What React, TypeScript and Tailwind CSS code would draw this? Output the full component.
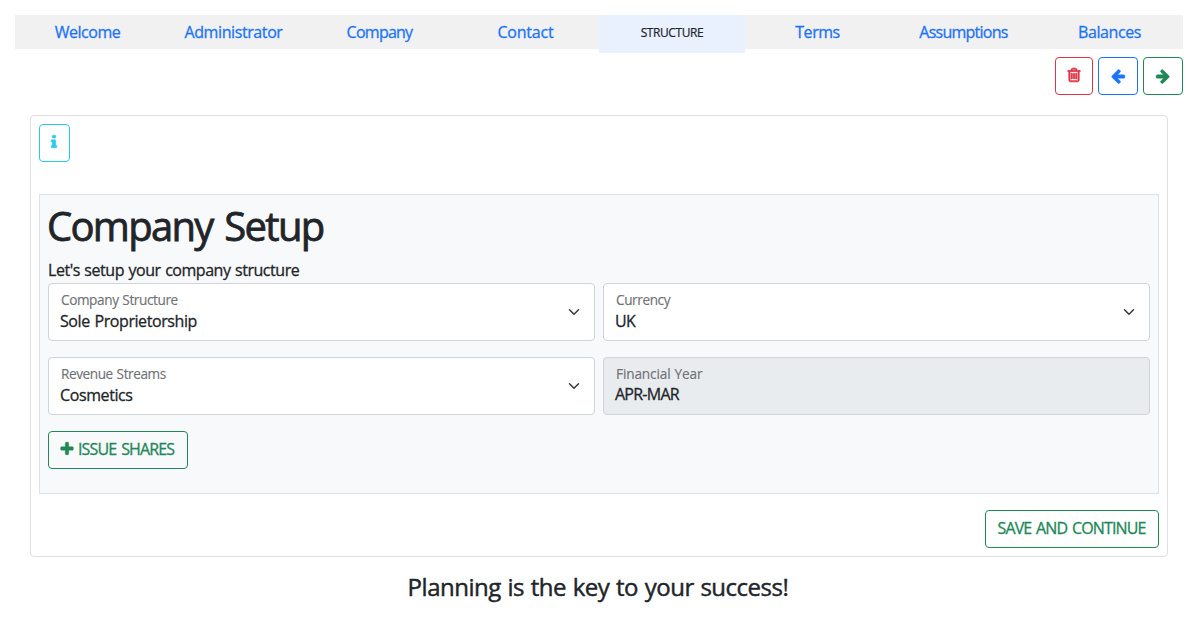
import React from "react";

const ICONS = {
  trash:
    "M704 736v576q0 14-9 23t-23 9h-64q-14 0-23-9t-9-23v-576q0-14 9-23t23-9h64q14 0 23 9t9 23zm256 0v576q0 14-9 23t-23 9h-64q-14 0-23-9t-9-23v-576q0-14 9-23t23-9h64q14 0 23 9t9 23zm256 0v576q0 14-9 23t-23 9h-64q-14 0-23-9t-9-23v-576q0-14 9-23t23-9h64q14 0 23 9t9 23zm128 724v-948h-896v948q0 22 7 40.5t14.5 27 10.5 8.5h832q3 0 10.5-8.5t14.5-27 7-40.5zm-672-1076h448l-48-117q-7-9-17-11h-317q-10 2-17 11zm928 32v64q0 14-9 23t-23 9h-96v948q0 83-47 143.5t-113 60.5h-832q-66 0-113-58.5t-47-141.5v-952h-96q-14 0-23-9t-9-23v-64q0-14 9-23t23-9h309l70-167q15-37 54-63t79-26h320q40 0 79 26t54 63l70 167h309q14 0 23 9t9 23z",
  arrow:
    "M1664 896v128q0 53-32.5 90.5t-84.5 37.5h-704l293 294q38 36 38 90t-38 90l-75 76q-37 37-90 37-52 0-91-37l-651-652q-37-37-37-90 0-52 37-91l651-650q38-38 91-38 52 0 90 38l75 74q38 38 38 91t-38 91l-293 293h704q52 0 84.5 37.5t32.5 90.5z",
  plus: "M1600 736v192q0 40-28 68t-68 28h-416v416q0 40-28 68t-68 28h-192q-40 0-68-28t-28-68v-416h-416q-40 0-68-28t-28-68v-192q0-40 28-68t68-28h416v-416q0-40 28-68t68-28h192q40 0 68 28t28 68v416h416q40 0 68 28t28 68z",
  info: "M1216 1344v128q0 26-19 45t-45 19h-512q-26 0-45-19t-19-45v-128q0-26 19-45t45-19h64v-384h-64q-26 0-45-19t-19-45v-128q0-26 19-45t45-19h384q26 0 45 19t19 45v576h64q26 0 45 19t19 45zm-128-1152v192q0 26-19 45t-45 19h-256q-26 0-45-19t-19-45v-192q0-26 19-45t45-19h256q26 0 45 19t19 45z",
};

function Icon({ name, bold = "50", className = "" }: { name: keyof typeof ICONS; bold?: string; className?: string }) {
  return (
    <svg viewBox="0 0 1792 1792" fill="currentColor" stroke="currentColor" strokeWidth={bold} className={`size-4 shrink-0 overflow-visible ${className}`}>
      <path d={ICONS[name]} />
    </svg>
  );
}

const tabs = [
  { label: "Welcome", track: "tracking-[-0.45px]" },
  { label: "Administrator", track: "tracking-[-0.4px]" },
  { label: "Company", track: "tracking-[-0.75px]" },
  { label: "Contact", track: "tracking-[-0.2px]" },
  { label: "STRUCTURE", track: "tracking-[-0.4px]", active: true },
  { label: "Terms", track: "tracking-[-0.45px]" },
  { label: "Assumptions", track: "tracking-[-0.75px]" },
  { label: "Balances", track: "tracking-[-0.4px]" },
];

function Field({ label, value, labelTrack, valueTrack, disabled = false }: { label: string; value: string; labelTrack: string; valueTrack: string; disabled?: boolean }) {
  return (
    <div className={`flex h-[58px] items-center justify-between rounded-[4px] border border-[#ced4da] pr-3 pl-[11px] ${disabled ? "bg-[#e9ecef]" : "bg-white"}`}>
      <div className={disabled ? "pb-[3px]" : "pb-[2px]"}>
        <div className={`pl-px text-[13.6px] whitespace-nowrap text-[#6f7275] [-webkit-text-stroke:0.15px] ${disabled ? "leading-[19px]" : "leading-5"} ${labelTrack}`}>{label}</div>
        <div className={`leading-[22px] whitespace-nowrap ${valueTrack}`}>{value}</div>
      </div>
      {!disabled && (
        <svg viewBox="0 0 16 16" fill="none" stroke="#343a40" strokeWidth="2" strokeLinecap="round" strokeLinejoin="round" className="h-3 w-4">
          <path d="m2 5 6 6 6-6" />
        </svg>
      )}
    </div>
  );
}

export default function App() {
  return (
    <div className="h-[644px] overflow-hidden bg-white pt-[15px] pr-[14px] pl-[15px] font-['Open_Sans',sans-serif] text-base text-[#212529] [-webkit-text-stroke:0.3px]">
      <nav className="grid h-[34px] grid-cols-8 items-start bg-[#f1f1f1]">
        {tabs.map((t) =>
          t.active ? (
            <button key={t.label} className={`h-[38px] bg-[#e9f1ff] pb-[2px] text-[12px] leading-[36px] [-webkit-text-stroke:0.2px] ${t.track}`}>{t.label}</button>
          ) : (
            <button key={t.label} className={`h-[34px] pr-px leading-[34px] text-[#1b73f8] ${t.track}`}>{t.label}</button>
          ),
        )}
      </nav>
      <div className="mt-2 flex justify-end gap-[5px]">
        <button className="flex h-[38px] w-[38px] items-center justify-center rounded-[4px] border border-[#dc3545] pb-[2px] text-[#dc3545]"><Icon name="trash" bold="90" /></button>
        <button className="flex h-[38px] w-10 items-center justify-center rounded-[4px] border border-[#1b73f8] pb-px text-[#1b73f8]"><Icon name="arrow" /></button>
        <button className="flex h-[38px] w-10 items-center justify-center rounded-[4px] border border-[#218756] pr-px pb-px text-[#218756]"><Icon name="arrow" className="-scale-x-100" /></button>
      </div>
      <main className="mx-[15px] mt-5 h-[442px] rounded-[4px] border border-[#dfdfdf] p-2">
        <button className="flex h-[38px] w-[31px] items-center justify-center rounded-[4px] border border-[#29c9ee] pr-px pb-[2px] text-[#29c9ee]"><Icon name="info" /></button>
        <section className="mt-8 h-[300px] border border-[#dee2e6] bg-[#f8f9fa] px-2 pt-2">
          <h1 className="-ml-px h-14 text-[40px] leading-[45px] whitespace-nowrap tracking-[-1.7px] [-webkit-text-stroke:0.8px] [word-spacing:3px]">Company Setup</h1>
          <p className="-ml-px h-6 pl-px leading-[22px] whitespace-nowrap tracking-[-0.46px] [word-spacing:0.8px]">Let's setup your company structure</p>
          <div className="grid grid-cols-2 gap-x-2 gap-y-4">
            <Field label="Company Structure" value="Sole Proprietorship" labelTrack="tracking-[-0.4px] [word-spacing:0.7px]" valueTrack="tracking-[-0.42px] [word-spacing:1px]" />
            <Field label="Currency" value="UK" labelTrack="tracking-[-0.4px]" valueTrack="tracking-[-0.7px]" />
            <Field label="Revenue Streams" value="Cosmetics" labelTrack="tracking-[-0.42px] [word-spacing:0.7px]" valueTrack="tracking-[-0.4px]" />
            <Field label="Financial Year" value="APR-MAR" labelTrack="tracking-[-0.12px] [word-spacing:0.6px]" valueTrack="tracking-[-0.75px]" disabled />
          </div>
          <button className="mt-4 flex h-[38px] w-[140px] items-center rounded-[4px] border border-[#218756] pb-[2px] pl-[10px] whitespace-nowrap text-[#218756]">
            <Icon name="plus" />
            <span className="ml-[3px] tracking-[-0.85px] [word-spacing:1.5px]">ISSUE SHARES</span>
          </button>
        </section>
        <div className="mt-4 flex justify-end">
          <button className="h-[38px] w-[174px] rounded-[4px] border border-[#218756] pr-px pb-[2px] tracking-[-0.88px] whitespace-nowrap text-[#218756] [word-spacing:1.5px]">SAVE AND CONTINUE</button>
        </div>
      </main>
      <footer className="mt-4 pr-[2px] text-center text-2xl leading-[28px] tracking-[-0.48px] [-webkit-text-stroke:0.45px] [word-spacing:0.9px]">Planning is the key to your success!</footer>
    </div>
  );
}
